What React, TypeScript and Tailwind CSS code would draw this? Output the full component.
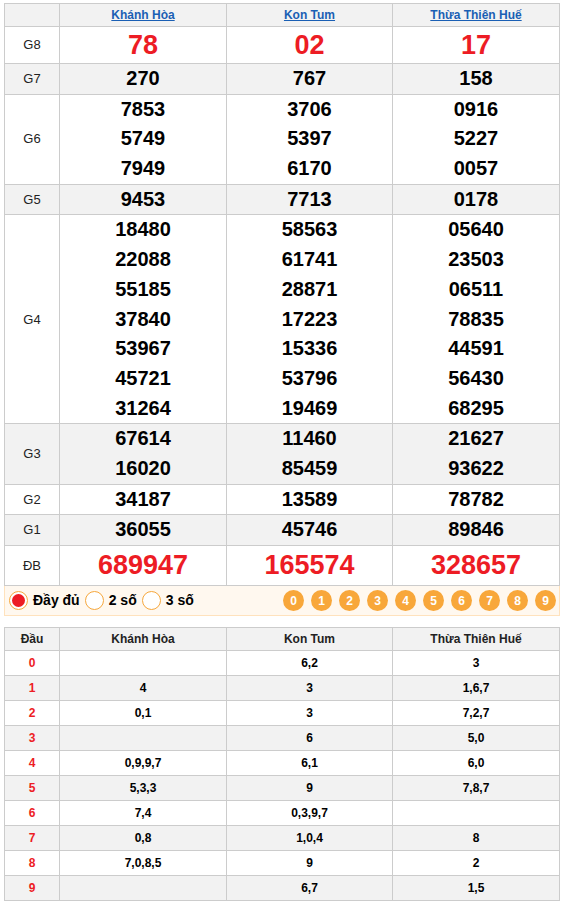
import React from "react";

const provinces = ["Khánh Hòa", "Kon Tum", "Thừa Thiên Huế"];

const prizes: { label: string; cols: string[][]; big?: boolean; tall?: boolean }[] = [
  { label: "G8", cols: [["78"], ["02"], ["17"]], big: true, tall: true },
  { label: "G7", cols: [["270"], ["767"], ["158"]] },
  { label: "G6", cols: [["7853", "5749", "7949"], ["3706", "5397", "6170"], ["0916", "5227", "0057"]] },
  { label: "G5", cols: [["9453"], ["7713"], ["0178"]] },
  {
    label: "G4",
    cols: [
      ["18480", "22088", "55185", "37840", "53967", "45721", "31264"],
      ["58563", "61741", "28871", "17223", "15336", "53796", "19469"],
      ["05640", "23503", "06511", "78835", "44591", "56430", "68295"],
    ],
  },
  { label: "G3", cols: [["67614", "16020"], ["11460", "85459"], ["21627", "93622"]] },
  { label: "G2", cols: [["34187"], ["13589"], ["78782"]] },
  { label: "G1", cols: [["36055"], ["45746"], ["89846"]] },
  { label: "ĐB", cols: [["689947"], ["165574"], ["328657"]], big: true },
];

const heads = [
  ["", "6,2", "3"],
  ["4", "3", "1,6,7"],
  ["0,1", "3", "7,2,7"],
  ["", "6", "5,0"],
  ["0,9,9,7", "6,1", "6,0"],
  ["5,3,3", "9", "7,8,7"],
  ["7,4", "0,3,9,7", ""],
  ["0,8", "1,0,4", "8"],
  ["7,0,8,5", "9", "2"],
  ["", "6,7", "1,5"],
];

export default function App() {
  return (
    <div className="w-[562px] h-[905px] bg-white px-[4px] pt-[3px] [font-family:'Liberation_Sans',Arial,sans-serif] text-[#222]">
      <table className="w-[556px] border-collapse table-fixed">
        <colgroup>
          <col className="w-[55px]" />
          <col className="w-[167px]" />
          <col className="w-[166px]" />
          <col className="w-[167px]" />
        </colgroup>
        <thead>
          <tr className="bg-[#f2f2f2] h-[23px]">
            <th className="border border-[#ccc] p-0"></th>
            {provinces.map((p) => (
              <th key={p} className="border border-[#ccc] p-0 text-[12px] font-bold">
                <span className="text-[#1a5fb4] underline">{p}</span>
              </th>
            ))}
          </tr>
        </thead>
        <tbody>
          {prizes.map((r, i) => (
            <tr key={r.label} className={i % 2 === 1 ? "bg-[#f2f2f2]" : "bg-white"}>
              <td className="border border-[#ccc] p-0 text-center text-[13px]">{r.label}</td>
              {r.cols.map((c, j) => (
                <td key={j} className="border border-[#ccc] p-0 text-center">
                  {c.map((n) => (
                    <div
                      key={n}
                      className={
                        r.big
                          ? r.tall
                            ? "font-bold text-[#ed1c24] text-[27px] leading-[36px]"
                            : "font-bold text-[#ed1c24] text-[27px] leading-[39px]"
                          : "font-bold text-[20px] leading-[29.69px] text-black"
                      }
                    >
                      {n}
                    </div>
                  ))}
                </td>
              ))}
            </tr>
          ))}
        </tbody>
      </table>

      <div className="w-[556px] h-[30px] flex items-center bg-[#fff8ef] border border-[#ffe2bd] border-t-0 pl-[4px] pr-[3px]">
        <div className="flex items-center gap-[5px]">
          <span className="w-[19px] h-[19px] rounded-full border border-[#f6a73c] bg-white flex items-center justify-center">
            <span className="w-[13px] h-[13px] rounded-full bg-[#ed1c24]" />
          </span>
          <span className="text-[14px] font-bold text-black">Đầy đủ</span>
        </div>
        <div className="flex items-center gap-[5px] ml-[5px]">
          <span className="w-[19px] h-[19px] rounded-full border border-[#f6a73c] bg-white" />
          <span className="text-[14px] font-bold text-black">2 số</span>
        </div>
        <div className="flex items-center gap-[5px] ml-[5px]">
          <span className="w-[19px] h-[19px] rounded-full border border-[#f6a73c] bg-white" />
          <span className="text-[14px] font-bold text-black">3 số</span>
        </div>
        <div className="ml-auto flex items-center gap-[7px]">
          {Array.from({ length: 10 }).map((_, d) => (
            <span
              key={d}
              className="w-[21px] h-[21px] rounded-full bg-[#f8a73a] text-white text-[12px] font-bold flex items-center justify-center"
            >
              {d}
            </span>
          ))}
        </div>
      </div>

      <table className="w-[556px] border-collapse table-fixed mt-[11px]">
        <colgroup>
          <col className="w-[55px]" />
          <col className="w-[167px]" />
          <col className="w-[166px]" />
          <col className="w-[167px]" />
        </colgroup>
        <thead>
          <tr className="bg-[#f2f2f2] h-[23px]">
            <th className="border border-[#ccc] p-0 text-[12px] font-bold">Đầu</th>
            {provinces.map((p) => (
              <th key={p} className="border border-[#ccc] p-0 text-[12px] font-bold">
                {p}
              </th>
            ))}
          </tr>
        </thead>
        <tbody>
          {heads.map((r, i) => (
            <tr key={i} className={`h-[25px] ${i % 2 === 1 ? "bg-[#f2f2f2]" : "bg-white"}`}>
              <td className="border border-[#ccc] p-0 text-center text-[12px] font-bold text-[#ed1c24]">{i}</td>
              {r.map((v, j) => (
                <td key={j} className="border border-[#ccc] p-0 text-center text-[12px] font-bold text-black">
                  {v}
                </td>
              ))}
            </tr>
          ))}
        </tbody>
      </table>
    </div>
  );
}
